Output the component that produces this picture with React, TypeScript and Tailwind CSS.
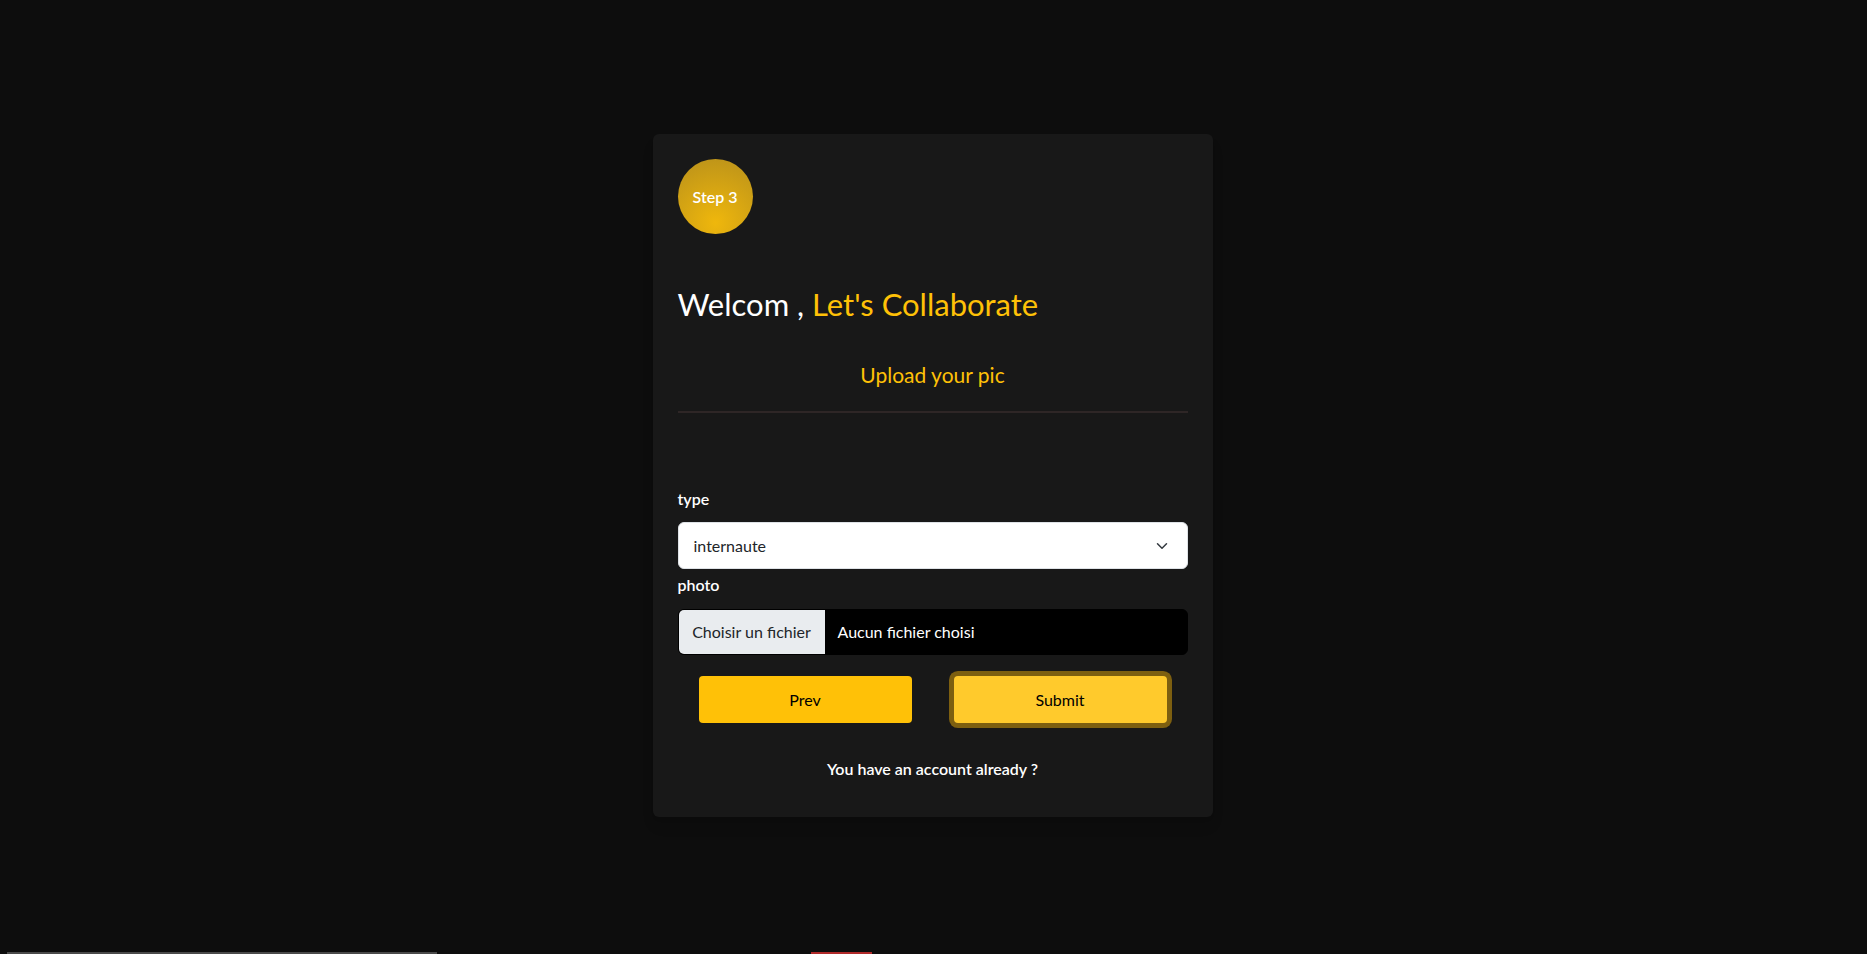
import React from 'react';
import { ChevronDown } from 'lucide-react';

const font = { fontFamily: "Lato, 'Liberation Sans', sans-serif" };

const App: React.FC = () => {
  return (
    <div className="relative min-h-[954px] w-full bg-[#0d0d0d] pt-[134px] overflow-hidden" style={font}>
      <div className="mx-auto w-[560px] -translate-x-[1px] rounded-md bg-[#181818] px-[25px] pt-[25px] pb-[36px] shadow-lg">
        <div className="flex h-[75px] w-[75px] items-center justify-center rounded-full bg-[radial-gradient(circle_at_50%_85%,#efb70c,#b8901b)] text-[16px] font-semibold text-white">
          Step 3
        </div>

        <h1 className="mt-[48px] text-[31px] leading-[44px] text-white">
          Welcom , <span className="text-[#ffc107]">Let's Collaborate</span>
        </h1>

        <h4 className="mt-[34px] text-center text-[21px] leading-[30px] text-[#ffc107]">Upload your pic</h4>

        <div className="mt-[21px] h-[2px] bg-[#2e2626]" />

        <form className="mt-[76px]" onSubmit={(e) => e.preventDefault()}>
          <label className="block text-[16px] font-semibold leading-[20px] text-white">type</label>
          <div className="mt-[13px] flex h-[47px] items-center justify-between rounded-md border border-[#dee2e6] bg-white pl-[15px] pr-[16px] text-[16px] text-[#212529]">
            <span>internaute</span>
            <ChevronDown size={18} strokeWidth={2} className="text-[#343a40]" />
          </div>

          <label className="mt-[6px] block text-[16px] font-semibold leading-[20px] text-white">photo</label>
          <div className="mt-[14px] flex h-[46px] items-stretch overflow-hidden rounded-md border border-black bg-black text-[16px]">
            <span className="flex w-[146px] items-center justify-center bg-[#e9ecef] text-[#212529]">Choisir un fichier</span>
            <span className="flex items-center pl-[13px] text-white">Aucun fichier choisi</span>
          </div>

          <div className="mt-[21px] flex justify-around">
            <button type="button" className="h-[47px] w-[213px] rounded bg-[#ffc107] text-[16px] text-black">
              Prev
            </button>
            <button type="submit" className="h-[47px] w-[213px] rounded bg-[#ffca2c] text-[16px] text-black shadow-[0_0_0_5px_#7d5f10]">
              Submit
            </button>
          </div>

          <p className="mt-[34px] text-center text-[16px] font-semibold text-white">You have an account already ?</p>
        </form>
      </div>

      <div className="absolute bottom-0 left-[7px] h-[2px] w-[430px] bg-[#4a4a4a]" />
      <div className="absolute bottom-0 left-[811px] h-[2px] w-[61px] bg-[#b02a2a]" />
    </div>
  );
};

export default App;
